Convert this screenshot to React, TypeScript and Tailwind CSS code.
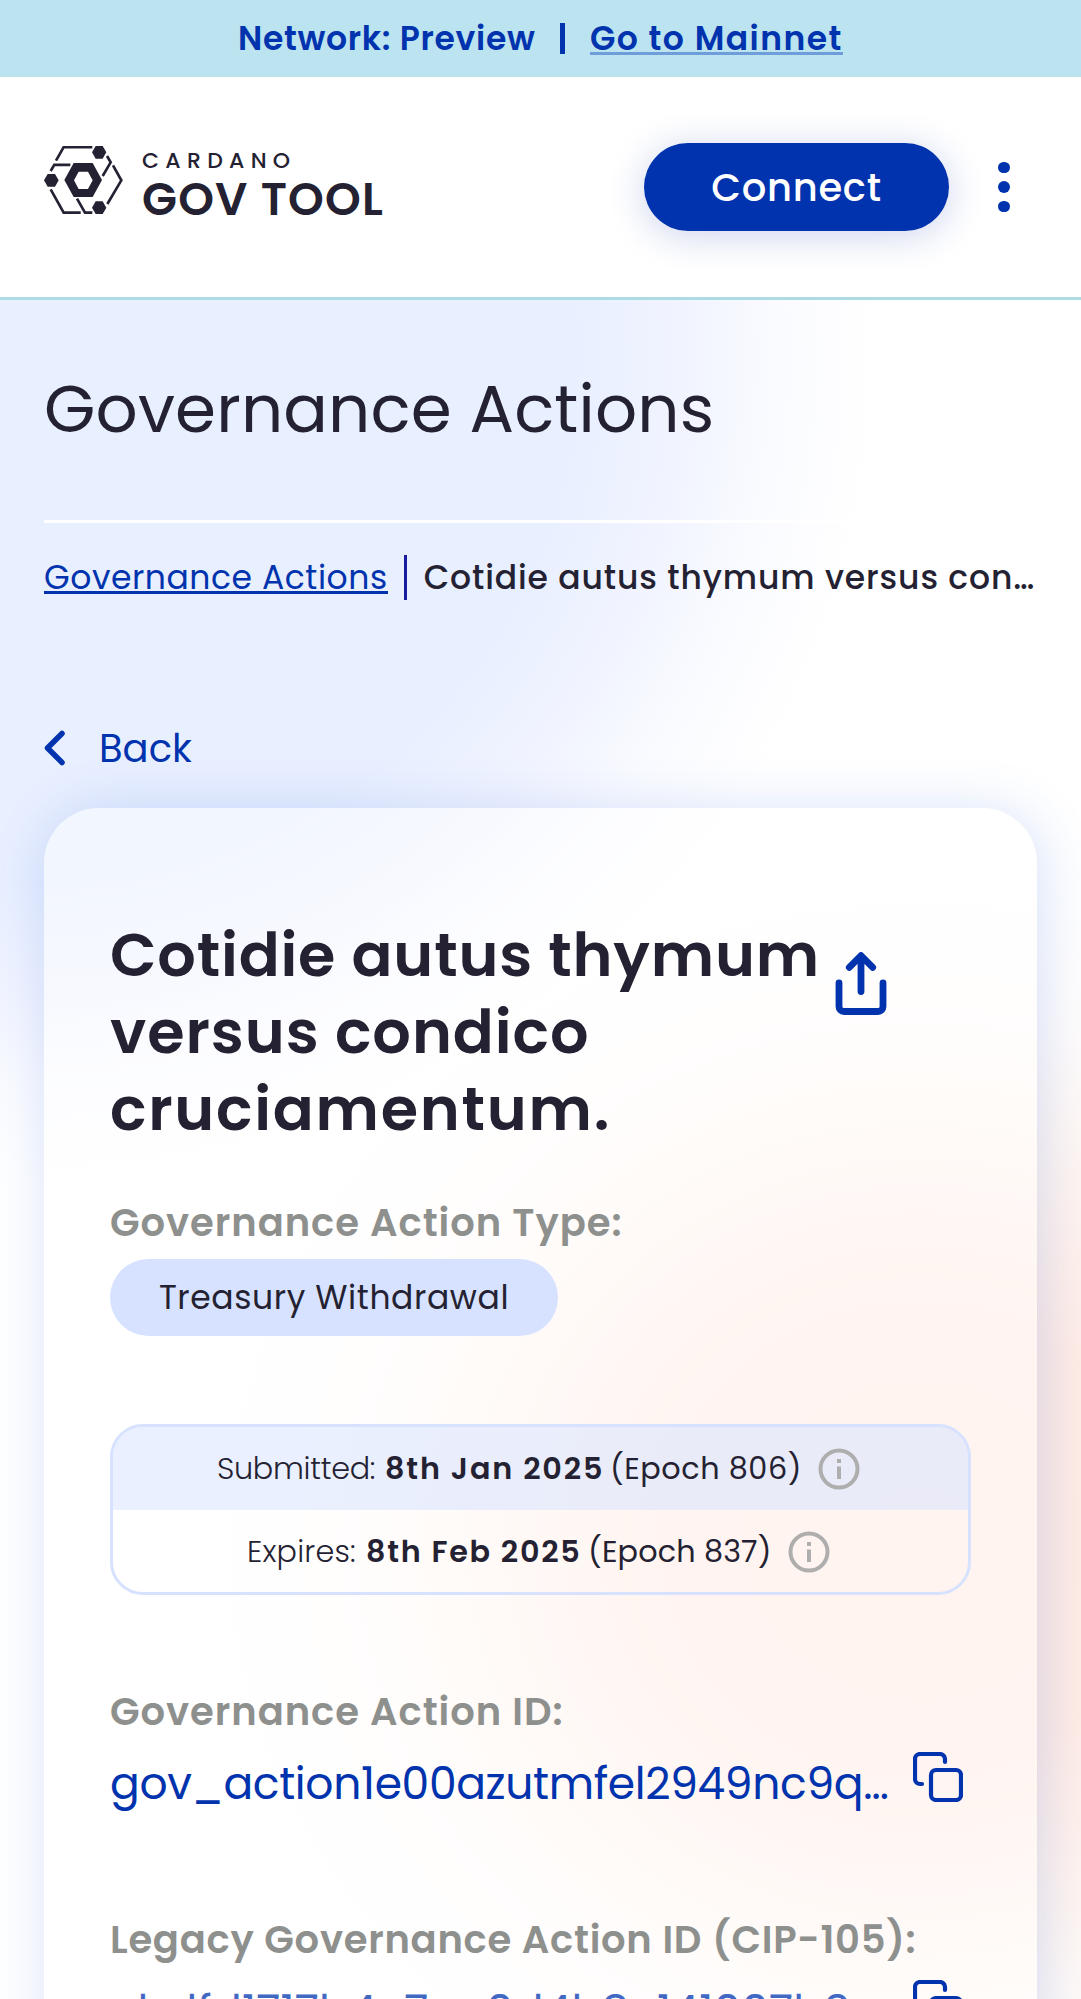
import React from "react";

function Logo() {
  return (
    <svg className="h-[68px] w-[79px] shrink-0" viewBox="42 48 237 204" fill="none">
      <g stroke="#242232" strokeWidth="8">
        <path d="M78 92 101 51.500H187" />
        <path d="M121 104.500H73L62 123" />
        <path d="M62 178 101 248H152" />
        <path d="M141 206 165 248H187" />
        <path d="M231 78 242 97 218 138" />
        <path d="M249 106 274 151 232 222" />
      </g>
      <g fill="#242232">
        <path d="M197 48H218L229 67 218 86H197L186 67Z" />
        <path d="M53 132H75L86 151 75 170H53L42 151Z" />
        <path d="M197 214H218L229 233 218 252H197L186 233Z" />
        <path fillRule="evenodd" d="M131 99H188L216 150 188 201H131L103 150ZM146 125 132 151 146 177H174L188 151 174 125Z" />
      </g>
    </svg>
  );
}

function ShareIcon() {
  return (
    <svg className="mt-[36px] ml-[16px] h-[63px] w-[52px] shrink-0" viewBox="0 0 52 63" fill="none" stroke="#0033ad" strokeWidth="6.800" strokeLinecap="round" strokeLinejoin="round">
      <path d="M26 39.500V4M14.300 15.300 26 3.600 37.700 15.300" />
      <path d="M4 31V54.500a5 5 0 0 0 5 5H43a5 5 0 0 0 5-5V31" />
    </svg>
  );
}

function CopyIcon() {
  return (
    <svg className="h-[50px] w-[50px] shrink-0" viewBox="0 0 50 50" fill="none" stroke="#0033ad" strokeWidth="4.200" strokeLinecap="round">
      <rect x="18" y="18" width="30" height="30" rx="5" />
      <path d="M32 10V7a5 5 0 0 0-5-5H7a5 5 0 0 0-5 5V27a5 5 0 0 0 5 5H9" />
    </svg>
  );
}

function InfoIcon() {
  return (
    <svg className="ml-[16px] h-[42px] w-[42px] shrink-0" viewBox="0 0 42 42" fill="none">
      <circle cx="21" cy="21" r="18.500" stroke="#adaead" strokeWidth="4" />
      <path d="M21 18.500V31M21 11V15" stroke="#adaead" strokeWidth="4" />
    </svg>
  );
}

function Label({ children, className }: { children: React.ReactNode; className: string }) {
  return <div className={"h-[58px] whitespace-nowrap text-[38.5px] leading-[59px] font-semibold text-[#8e908e] " + className}>{children}</div>;
}

export default function App() {
  return (
    <div className="flex h-[1999px] w-[1081px] flex-col overflow-hidden bg-white font-['Poppins','Inter',sans-serif] text-[#242232]">
      <div className="flex h-[77px] shrink-0 items-center bg-[#bbe3f0] pl-[238px] text-[33px] leading-[77px] font-semibold whitespace-nowrap text-[#0033ad]">
        <span className="w-[322px] tracking-[0.7px]">Network: Preview</span>
        <span className="h-[31px] w-[5px] bg-[#0033ad]" />
        <a className="ml-[25px] h-[55px] self-start border-b-3 border-[#6f9dda] leading-[77px] tracking-[1.45px]">Go to Mainnet</a>
      </div>

      <header className="flex h-[223px] shrink-0 items-center border-b-3 border-[#acdbe6] bg-white pl-[44px]">
        <div className="flex -translate-y-[7px] items-center">
          <Logo />
          <div className="mt-[2px] ml-[19px] w-[260px] whitespace-nowrap">
            <div className="h-[36px] text-[22px] leading-[34px] font-medium tracking-[6.3px]">CARDANO</div>
            <div className="h-[39px] text-[45.5px] leading-[39px] font-semibold tracking-[1.2px]">GOV TOOL</div>
          </div>
        </div>
        <button className="ml-[242px] h-[88px] w-[305px] shrink-0 rounded-full bg-[#0033ad] pt-[2px] text-[38.5px] font-medium tracking-[0.7px] text-white shadow-[0_5px_36px_rgba(30,60,180,0.22)]">
          Connect
        </button>
        <div className="ml-[49px] flex flex-col gap-[8px]">
          <span className="size-[11.5px] rounded-full bg-[#0033ad]" />
          <span className="size-[11.5px] rounded-full bg-[#0033ad]" />
          <span className="size-[11.5px] rounded-full bg-[#0033ad]" />
        </div>
      </header>

      <main className="flex h-[1699px] flex-col bg-[radial-gradient(ellipse_720px_660px_at_920px_1240px,#ffebe2_0%,#ffece5_35%,rgba(255,243,237,0.8)_60%,rgba(255,250,248,0.5)_80%,rgba(255,255,255,0)_100%),radial-gradient(ellipse_860px_820px_at_20px_60px,#e8effe_0%,#e8efff_64%,#f1f4ff_77%,#fafbff_88%,rgba(255,255,255,0)_100%)] px-[44px]">
        <h1 className="mt-[59px] h-[100px] text-[66px] leading-[100px] tracking-[0.15px] whitespace-nowrap">Governance Actions</h1>
        <div className="mt-[61px] h-[3px] shrink-0 bg-white" />
        <nav className="mt-[32px] flex h-[45px] shrink-0 text-[33px] leading-[45px] whitespace-nowrap">
          <a className="h-[39px] border-b-3 border-[#0033ad] tracking-[0.55px] text-[#0033ad]">Governance Actions</a>
          <span className="ml-[16px] h-[45px] w-[3px] shrink-0 bg-[#1a1a9c]" />
          <span className="ml-[17px] font-medium tracking-[0.88px]">Cotidie autus thymum versus con…</span>
        </nav>

        <button className="mt-[123px] flex h-[50px] shrink-0 items-center text-[38.5px] leading-[50px] text-[#0033ad]">
          <svg className="h-[36px] w-[21px]" viewBox="0 0 21 36" fill="none" stroke="#0033ad" strokeWidth="5.500" strokeLinecap="round" strokeLinejoin="round">
            <path d="M18 3.500 3.500 18 18 32.500" />
          </svg>
          <span className="mt-[2px] ml-[34px]">Back</span>
        </button>

        <section className="mt-[35px] h-[1300px] shrink-0 rounded-[55px] bg-white/45 px-[66px] pt-[108px] shadow-[4px_4px_55px_rgba(47,98,220,0.2)]">
          <div className="flex h-[232px] whitespace-nowrap">
            <h2 className="w-[709px] text-[60.5px] leading-[77px] font-semibold">
              <span className="block tracking-[0.82px]">Cotidie autus thymum</span>
              <span className="block tracking-[0.95px]">versus condico</span>
              <span className="block tracking-[1.75px]">cruciamentum.</span>
            </h2>
            <ShareIcon />
          </div>

          <Label className="mt-[45px] tracking-[0.95px]">Governance Action Type:</Label>
          <div className="mt-[8px] flex h-[77px] w-[448px] items-center justify-center rounded-full bg-[#d6e2ff] text-[33px] tracking-[0.6px] whitespace-nowrap">
            Treasury Withdrawal
          </div>

          <div className="mt-[88px] h-[171px] w-[861px] overflow-hidden rounded-[33px] border-3 border-[#d6e2ff] text-[30.25px] whitespace-nowrap">
            <div className="flex h-[83px] items-center bg-[#d6e2ff]/50 pt-[1px] pl-[104px]">
              <span className="w-[168px] font-light tracking-[-0.3px]">Submitted:</span>
              <span className="w-[225px] font-semibold tracking-[1.85px]">8th Jan 2025</span>
              <span className="tracking-[0.55px]">(Epoch 806)</span>
              <InfoIcon />
            </div>
            <div className="flex h-[82px] items-center pt-[1px] pl-[134px]">
              <span className="w-[119px] font-light tracking-[0.2px]">Expires:</span>
              <span className="w-[222px] font-semibold tracking-[1.75px]">8th Feb 2025</span>
              <span className="tracking-[0.15px]">(Epoch 837)</span>
              <InfoIcon />
            </div>
          </div>

          <Label className="mt-[87px] tracking-[0.95px]">Governance Action ID:</Label>
          <div className="mt-[12px] flex h-[60px] w-[853px] justify-between">
            <span className="text-[44px] leading-[64px] tracking-[-0.35px] whitespace-nowrap text-[#0033ad]">gov_action1e00azutmfel2949nc9q…</span>
            <CopyIcon />
          </div>

          <Label className="mt-[98px] tracking-[0.72px]">Legacy Governance Action ID (CIP-105):</Label>
          <div className="mt-[12px] flex h-[60px] w-[853px] justify-between">
            <span className="text-[44px] leading-[64px] tracking-[0.2px] whitespace-nowrap text-[#4169c4]">ebdfd1717b4e7ea0d4b8e141007b9…</span>
            <CopyIcon />
          </div>
        </section>
      </main>
    </div>
  );
}
